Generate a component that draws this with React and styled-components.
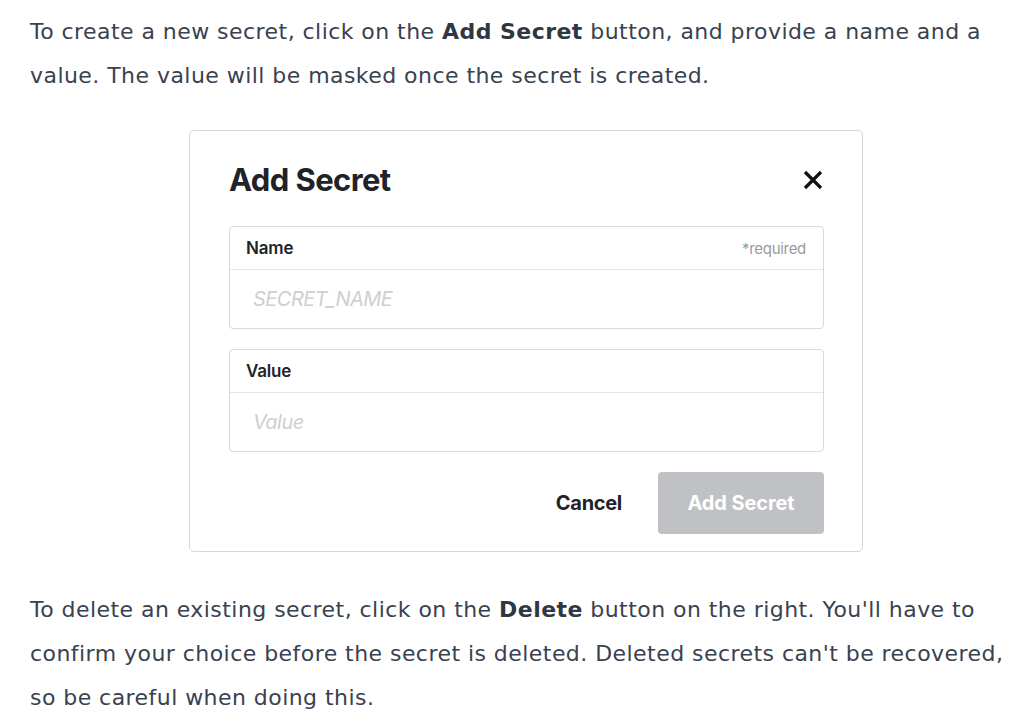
import React from 'react';
import styled, { createGlobalStyle } from 'styled-components';

const GlobalStyle = createGlobalStyle`
  body {
    margin: 0;
    background: #ffffff;
  }
`;

const Page = styled('div')`
  padding: 10px 30px 0 30px;
  font-family: "DejaVu Sans", sans-serif;
  color: #384250;
`;

const Paragraph = styled('p')`
  margin: 0;
  font-size: 22px;
  letter-spacing: 0.45px;
  line-height: 44px;
  white-space: nowrap;

  b {
    font-weight: 700;
    color: #2f3742;
  }
`;

const Frame = styled('div')`
  margin: 32px 0 36px 159px;
  width: 674px;
  height: 422px;
  box-sizing: border-box;
  border: 1px solid #d6d6d6;
  border-radius: 5px;
  padding: 0 38px 0 39px;
  font-family: Inter, "Liberation Sans", sans-serif;
  display: flex;
  flex-direction: column;
`;

const Header = styled('div')`
  display: flex;
  align-items: center;
  justify-content: space-between;
  height: 93px;
  padding-top: 2px;
`;

const Title = styled('h2')`
  margin: 0;
  font-size: 31px;
  font-weight: 700;
  letter-spacing: -0.6px;
  color: #1f2329;
`;

const CloseButton = styled('button')`
  border: none;
  background: none;
  padding: 0;
  width: 22px;
  height: 22px;
  display: flex;
  align-items: center;
  justify-content: center;
`;

const Field = styled('div')`
  border: 1px solid #d9d9d9;
  border-radius: 4px;
  height: 103px;
  box-sizing: border-box;
  margin-bottom: 20px;
  display: flex;
  flex-direction: column;
`;

const FieldHead = styled('div')`
  height: 43px;
  box-sizing: border-box;
  border-bottom: 1px solid #e6e6e6;
  display: flex;
  align-items: center;
  justify-content: space-between;
  padding: 0 17px 0 16px;
`;

const Label = styled('span')`
  font-size: 17px;
  font-weight: 600;
  color: #1f2329;
  letter-spacing: -0.2px;
`;

const Hint = styled('span')`
  font-size: 15px;
  color: #9a9a9a;
  letter-spacing: -0.3px;
`;

const Input = styled('input')`
  flex: 1;
  border: none;
  outline: none;
  background: transparent;
  padding: 0 23px;
  font-family: Inter, "Liberation Sans", sans-serif;
  font-size: 20px;
  font-style: italic;
  letter-spacing: -0.5px;
  color: #1f2329;

  &::placeholder {
    color: #cfcfcf;
  }
`;

const Actions = styled('div')`
  display: flex;
  justify-content: flex-end;
  align-items: center;
  gap: 36px;
`;

const TextButton = styled('button')`
  border: none;
  background: none;
  padding: 0;
  font-family: Inter, "Liberation Sans", sans-serif;
  font-size: 20px;
  font-weight: 700;
  letter-spacing: -0.3px;
  color: #1f2329;
`;

const PrimaryButton = styled('button')`
  border: none;
  border-radius: 4px;
  width: 166px;
  height: 62px;
  background: #c0c1c4;
  color: #ffffff;
  font-family: Inter, "Liberation Sans", sans-serif;
  font-size: 20px;
  font-weight: 700;
  letter-spacing: -0.1px;
`;

const CloseIcon = () => (
  <svg width="20" height="20" viewBox="0 0 20 20">
    <path d="M2 2 L18 18 M18 2 L2 18" stroke="#111" strokeWidth="3.2" strokeLinecap="butt" />
  </svg>
);

const App = () => (
  <>
    <GlobalStyle />
    <Page>
      <Paragraph>
        To create a new secret, click on the <b>Add Secret</b> button, and provide a name and a
        <br />
        value. The value will be masked once the secret is created.
      </Paragraph>
      <Frame>
        <Header>
          <Title>Add Secret</Title>
          <CloseButton aria-label="Close">
            <CloseIcon />
          </CloseButton>
        </Header>
        <Field>
          <FieldHead>
            <Label>Name</Label>
            <Hint>*required</Hint>
          </FieldHead>
          <Input placeholder="SECRET_NAME" />
        </Field>
        <Field>
          <FieldHead>
            <Label>Value</Label>
          </FieldHead>
          <Input placeholder="Value" />
        </Field>
        <Actions>
          <TextButton>Cancel</TextButton>
          <PrimaryButton disabled>Add Secret</PrimaryButton>
        </Actions>
      </Frame>
      <Paragraph>
        To delete an existing secret, click on the <b>Delete</b> button on the right. You'll have to
        <br />
        confirm your choice before the secret is deleted. Deleted secrets can't be recovered,
        <br />
        so be careful when doing this.
      </Paragraph>
    </Page>
  </>
);

export default App;
